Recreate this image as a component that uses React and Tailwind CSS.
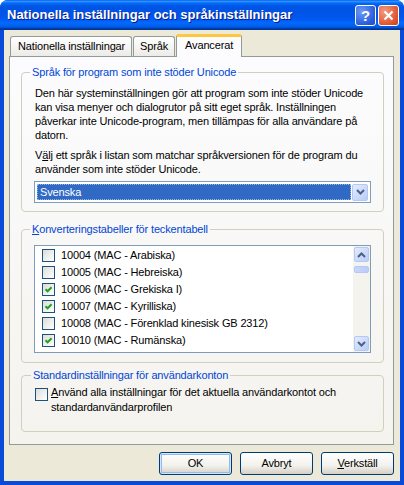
import React from 'react';

const FONT = { fontFamily: '"Liberation Sans", Arial, sans-serif' };

function Check({ checked, className = '' }) {
  return (
    <span className={`w-[13px] h-[13px] shrink-0 border border-[#1C5180] bg-[linear-gradient(135deg,#DCDCD7,#FFFFFF)] flex items-center justify-center ${className}`}>
      {checked && (
        <svg width="9" height="9" viewBox="0 0 9 9">
          <path d="M1.5 4.2 L3.6 6.3 L7.6 2.2" fill="none" stroke="#21A121" strokeWidth="2" />
        </svg>
      )}
    </span>
  );
}

function Arrow({ up }) {
  return (
    <svg width="9" height="6" viewBox="0 0 9 6">
      <path d={up ? 'M1 5 L4.5 1.5 L8 5' : 'M1 1 L4.5 4.5 L8 1'} fill="none" stroke="#4D6185" strokeWidth="2" />
    </svg>
  );
}

function ScrollBtn({ up }) {
  return (
    <div className="h-[15px] mx-[1px] rounded-[2px] border border-[#B4C8F6] bg-[linear-gradient(135deg,#E4ECFD,#B9CCF8)] flex items-center justify-center">
      <Arrow up={up} />
    </div>
  );
}

function Group({ label, children, className = '' }) {
  return (
    <fieldset className={`border border-[#D0D0BF] rounded-[4px] px-[12px] ${className}`}>
      <legend className="ml-[-4px] px-[2px] text-[#0046D5] leading-[14px]">{label}</legend>
      {children}
    </fieldset>
  );
}

function Button({ children, isDefault }) {
  return (
    <button className={`w-[73px] h-[23px] rounded-[3px] border border-[#003C74] bg-[linear-gradient(#FFFFFF,#F2F1EC_60%,#D6D0C5)] text-[11px] text-black ${isDefault ? 'shadow-[inset_0_0_0_1px_#CEE7FF,inset_0_0_0_2px_#98B8EA]' : ''}`}>
      {children}
    </button>
  );
}

const rows = [
  ['10004 (MAC - Arabiska)', false],
  ['10005 (MAC - Hebreiska)', false],
  ['10006 (MAC - Grekiska I)', true],
  ['10007 (MAC - Kyrilliska)', true],
  ['10008 (MAC - Förenklad kinesisk GB 2312)', false],
  ['10010 (MAC - Rumänska)', true],
];

export default function App() {
  return (
    <div className="w-[404px] h-[485px] bg-[#0A4AD8] rounded-t-[8px] flex flex-col text-[11px] text-black" style={FONT}>
      {/* Title bar */}
      <div className="h-[30px] shrink-0 rounded-t-[8px] bg-[linear-gradient(#0058EE_0%,#3593FF_4%,#288EFF_6%,#127DFF_8%,#036FFC_10%,#0262EE_14%,#0057E5_20%,#0054E3_24%,#0055EB_56%,#005BF5_66%,#026AFE_76%,#0062EF_86%,#0052D6_92%,#0040AB_94%,#003092_100%)] flex items-center pl-[7px] pr-[5px]">
        <span className="text-white font-bold text-[13px] [text-shadow:1px_1px_0_#0A1883] flex-1">
          Nationella inställningar och språkinställningar
        </span>
        <div className="flex gap-[2px]">
          <div className="w-[21px] h-[21px] rounded-[3px] border border-white bg-[radial-gradient(circle_at_30%_30%,#6E9BF5,#2A5DDB_70%,#1D4CC8)] flex items-center justify-center text-white font-bold text-[15px] leading-none">?</div>
          <div className="w-[21px] h-[21px] rounded-[3px] border border-white bg-[radial-gradient(circle_at_30%_30%,#F39C80,#E0532F_70%,#C8401E)] flex items-center justify-center">
            <svg width="11" height="11" viewBox="0 0 11 11">
              <path d="M1.5 1.5 L9.5 9.5 M9.5 1.5 L1.5 9.5" stroke="white" strokeWidth="2.2" />
            </svg>
          </div>
        </div>
      </div>

      {/* Body */}
      <div className="flex-1 mx-[4px] mb-[4px] bg-[#ECE9D8] flex flex-col pl-[5px] pr-[6px] pt-[4px] tracking-[-0.15px]">
        {/* Tabs */}
        <div className="h-[22px] flex items-end pl-[1px] relative z-10">
          <div className="h-[20px] pl-[7px] pr-[6px] border border-b-0 border-[#919B9C] rounded-t-[3px] bg-[linear-gradient(#FFFFFF,#ECEBE6)] flex items-center">Nationella inställningar</div>
          <div className="h-[20px] px-[6px] ml-[1px] border border-b-0 border-[#919B9C] rounded-t-[3px] bg-[linear-gradient(#FFFFFF,#ECEBE6)] flex items-center">Språk</div>
          <div className="h-[23px] mb-[-1px] px-[8px] ml-[1px] border border-b-0 border-[#919B9C] border-t-[3px] border-t-[#FFC83C] rounded-t-[3px] bg-[#FCFCFE] flex items-center pb-[3px]">Avancerat</div>
        </div>

        {/* Panel */}
        <div className="h-[389px] border border-[#919B9C] bg-[linear-gradient(#FCFCFE,#F4F3EE)] pl-[11px] pr-[9px] pt-[8px] flex flex-col">
          <Group label="Språk för program som inte stöder Unicode" className="pb-[8px]">
            <p className="leading-[14px] mt-[7px] pl-[1px]">
              Den här systeminställningen gör att program som inte stöder Unicode kan visa menyer och dialogrutor på sitt eget språk. Inställningen påverkar inte Unicode-program, men tillämpas för alla användare på datorn.
            </p>
            <p className="leading-[14px] mt-[6px] pl-[1px]">
              V<span className="underline">ä</span>lj ett språk i listan som matchar språkversionen för de program du använder som inte stöder Unicode.
            </p>
            <div className="mt-[5px] h-[22px] border border-[#7F9DB9] bg-white flex items-center p-[2px]">
              <div className="flex-1 h-full bg-[#316AC5] text-white border border-dotted border-[#FFFFFF80] flex items-center pl-[2px]">Svenska</div>
              <div className="w-[16px] h-[17px] ml-[1px] rounded-[2px] border border-[#B4C8F6] bg-[linear-gradient(135deg,#E4ECFD,#B9CCF8)] flex items-center justify-center">
                <Arrow />
              </div>
            </div>
          </Group>

          <Group label={<><span className="underline">K</span>onverteringstabeller för teckentabell</>} className="mt-[10px] pb-[9px]">
            <div className="mt-[9px] h-[108px] border border-[#7F9DB9] bg-white flex">
              <div className="flex-1 pt-[1px] pl-[7px]">
                {rows.map(([t, c]) => (
                  <div key={t} className="h-[17px] flex items-center gap-[6px]">
                    <Check checked={c} />
                    <span>{t}</span>
                  </div>
                ))}
              </div>
              <div className="w-[17px] bg-[#F4F3EE] flex flex-col pt-[1px] pb-[1px]">
                <ScrollBtn up />
                <div className="h-[7px] mt-[4px] mx-[1px] rounded-[2px] border border-[#B4C8F6] bg-[linear-gradient(90deg,#C8D7FB,#B9CCF8)]"></div>
                <div className="flex-1"></div>
                <ScrollBtn />
              </div>
            </div>
          </Group>

          <Group label="Standardinställningar för användarkonton" className="mt-[5px] pb-[16px] pl-[13px]">
            <div className="flex mt-[3px]">
              <Check className="mt-[3px] mr-[3px]" />
              <p className="leading-[15px]">
                <span className="underline">A</span>nvänd alla inställningar för det aktuella användarkontot och standardanvändarprofilen
              </p>
            </div>
          </Group>
        </div>

        {/* Buttons */}
        <div className="flex justify-end gap-[8px] mt-[7px]">
          <Button isDefault>OK</Button>
          <Button>Avbryt</Button>
          <Button><span className="underline">V</span>erkställ</Button>
        </div>
      </div>
    </div>
  );
}
